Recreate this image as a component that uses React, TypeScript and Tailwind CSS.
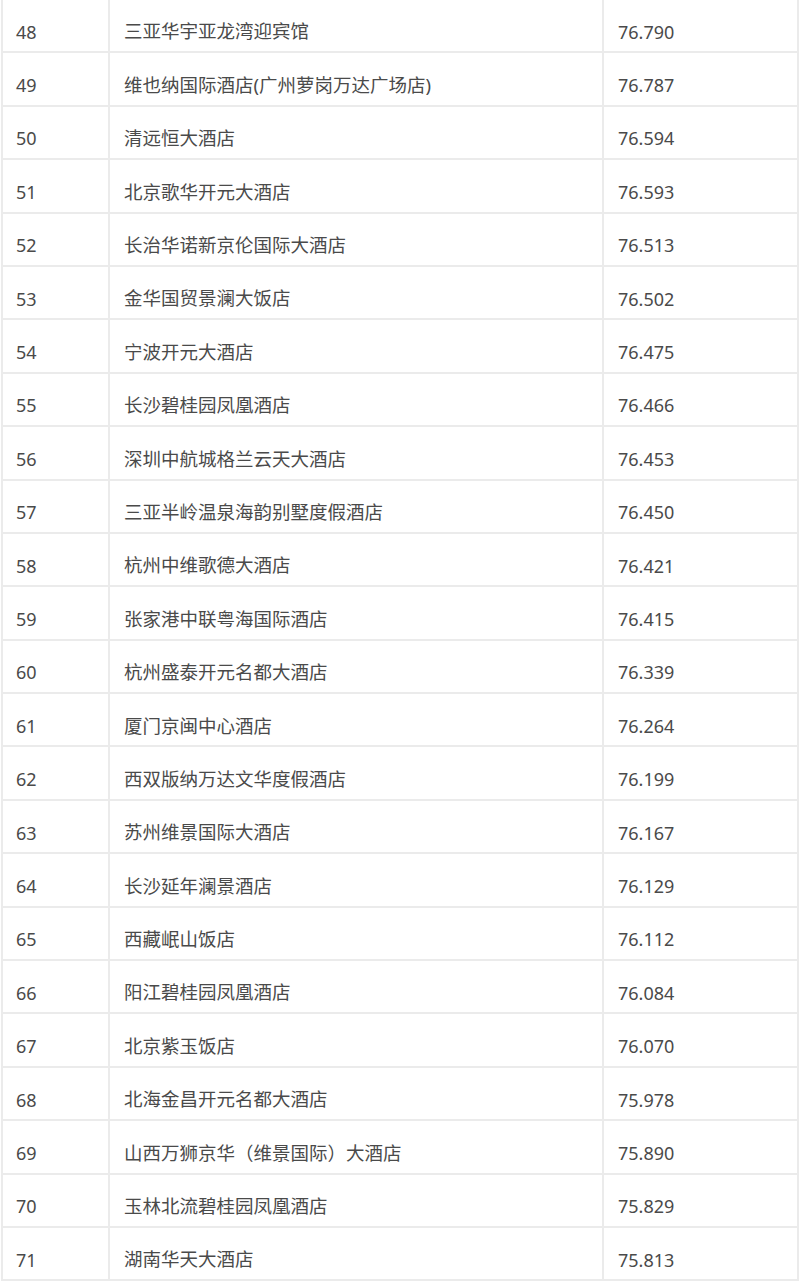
import React from "react";

const rows: [string, string, string][] = [
  ["48", "三亚华宇亚龙湾迎宾馆", "76.790"],
  ["49", "维也纳国际酒店(广州萝岗万达广场店)", "76.787"],
  ["50", "清远恒大酒店", "76.594"],
  ["51", "北京歌华开元大酒店", "76.593"],
  ["52", "长治华诺新京伦国际大酒店", "76.513"],
  ["53", "金华国贸景澜大饭店", "76.502"],
  ["54", "宁波开元大酒店", "76.475"],
  ["55", "长沙碧桂园凤凰酒店", "76.466"],
  ["56", "深圳中航城格兰云天大酒店", "76.453"],
  ["57", "三亚半岭温泉海韵别墅度假酒店", "76.450"],
  ["58", "杭州中维歌德大酒店", "76.421"],
  ["59", "张家港中联粤海国际酒店", "76.415"],
  ["60", "杭州盛泰开元名都大酒店", "76.339"],
  ["61", "厦门京闽中心酒店", "76.264"],
  ["62", "西双版纳万达文华度假酒店", "76.199"],
  ["63", "苏州维景国际大酒店", "76.167"],
  ["64", "长沙延年澜景酒店", "76.129"],
  ["65", "西藏岷山饭店", "76.112"],
  ["66", "阳江碧桂园凤凰酒店", "76.084"],
  ["67", "北京紫玉饭店", "76.070"],
  ["68", "北海金昌开元名都大酒店", "75.978"],
  ["69", "山西万狮京华（维景国际）大酒店", "75.890"],
  ["70", "玉林北流碧桂园凤凰酒店", "75.829"],
  ["71", "湖南华天大酒店", "75.813"],
];

export default function App() {
  return (
    <div
      className="w-[800px] h-[1283px] bg-white overflow-hidden text-[18px] text-[#4a4a4a]"
      style={{ fontFamily: '"Noto Sans", "Noto Sans CJK SC", sans-serif' }}
    >
      <div className="ml-[1px] w-[798px] border-l-2 border-r-2 border-[#ebebeb]">
        {rows.map(([n, name, score]) => (
          <div
            key={n}
            className="grid grid-cols-[107px_494px_1fr] h-[53.4px] border-b-2 border-[#ebebeb]"
          >
            <div className="flex items-center pt-[12px] pl-[13px] border-r-2 border-[#ebebeb] leading-none">
              {n}
            </div>
            <div className="flex items-center pt-[12px] pl-[14px] border-r-2 border-[#ebebeb] leading-none whitespace-nowrap text-[18.5px]">
              {name}
            </div>
            <div className="flex items-center pt-[12px] pl-[14px] leading-none">
              {score}
            </div>
          </div>
        ))}
      </div>
    </div>
  );
}
